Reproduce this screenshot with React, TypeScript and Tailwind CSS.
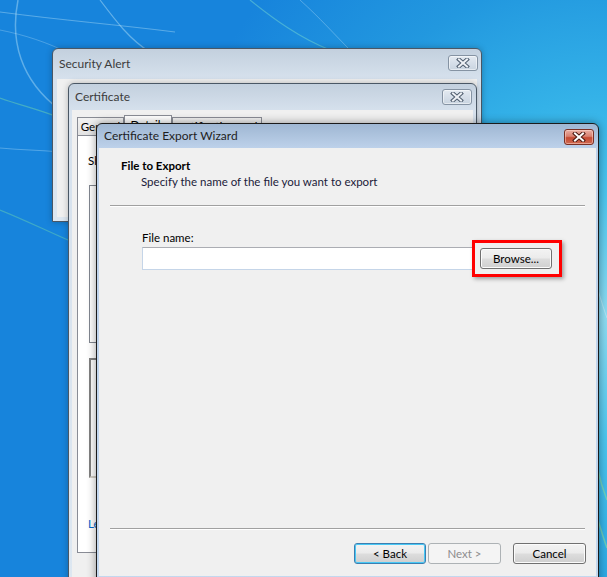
import React from 'react';

const ui = "font-['Segoe_UI','Lato',sans-serif] text-[11.5px]";

function CloseX({ variant }: { variant: 'inactive' | 'active' }) {
  const outline = variant === 'active' ? '#4a1810' : '#4f5d6e';
  const fill = variant === 'active' ? '#ffffff' : '#eef1f5';
  return (
    <svg width="14" height="10" viewBox="0 0 14 10" className="block">
      <path d="M3 1.5 L11 8.5 M11 1.5 L3 8.5" stroke={outline} strokeWidth="4" strokeLinecap="square" />
      <path d="M3 1.5 L11 8.5 M11 1.5 L3 8.5" stroke={fill} strokeWidth="2" strokeLinecap="square" />
    </svg>
  );
}

function CloseButton({ variant }: { variant: 'inactive' | 'active' }) {
  if (variant === 'active') {
    return (
      <div className="flex h-[16px] w-[30px] items-center justify-center rounded-[3px] border border-[#7a3024] bg-[linear-gradient(#eab0a5_0%,#d9806f_45%,#c54a33_55%,#cf6a52_100%)] shadow-[inset_0_0_0_1px_rgba(255,220,210,0.5)]">
        <CloseX variant="active" />
      </div>
    );
  }
  return (
    <div className="flex h-[16px] w-[30px] items-center justify-center rounded-[3px] border border-[#8593a3] bg-[linear-gradient(#e4eaf1_0%,#d6dfe9_50%,#c9d4e0_100%)] shadow-[inset_0_0_0_1px_rgba(255,255,255,0.5)]">
      <CloseX variant="inactive" />
    </div>
  );
}

function Button({
  children,
  state = 'normal',
  className = '',
}: {
  children: React.ReactNode;
  state?: 'normal' | 'default' | 'disabled';
  className?: string;
}) {
  const styles = {
    normal:
      'border-[#707070] text-[#000] bg-[linear-gradient(#f3f3f3_0%,#ebebeb_48%,#dddddd_52%,#cfcfcf_100%)] shadow-[inset_0_0_0_1px_#fbfbfb]',
    default:
      'border-[#3c7fb1] text-[#000] bg-[linear-gradient(#f3f3f3_0%,#ebebeb_48%,#dddddd_52%,#cfcfcf_100%)] shadow-[inset_0_0_0_1px_#48c8f5]',
    disabled: 'border-[#adb2b5] text-[#8d8d8d] bg-[#f4f4f4]',
  }[state];
  return (
    <div
      className={`flex h-[21px] items-center justify-center rounded-[3px] border ${styles} ${className}`}
    >
      {children}
    </div>
  );
}

function Desktop() {
  return (
    <svg className="absolute inset-0" width="607" height="577" viewBox="0 0 607 577">
      <path d="M18 0 C10 40 20 80 60 110" stroke="#b5e3f8" strokeOpacity="0.45" strokeWidth="1.5" fill="none" />
      <path d="M0 12 C60 20 120 25 175 32" stroke="#bfe6f8" strokeOpacity="0.4" strokeWidth="1" fill="none" />
      <path d="M0 30 C50 40 90 60 130 95" stroke="#bfe6f8" strokeOpacity="0.3" strokeWidth="1" fill="none" />
      <path d="M100 0 C115 20 130 40 150 52" stroke="#bfe6f8" strokeOpacity="0.45" strokeWidth="1.2" fill="none" />
      <path d="M250 0 C275 20 300 38 330 50" stroke="#7fe0d0" strokeOpacity="0.45" strokeWidth="1.2" fill="none" />
      <path d="M300 0 C320 18 335 35 350 50" stroke="#bfe6f8" strokeOpacity="0.35" strokeWidth="1" fill="none" />
      <path d="M0 98 C20 105 40 110 55 116" stroke="#6fd6b0" strokeOpacity="0.5" strokeWidth="1.2" fill="none" />
      <path d="M0 148 C20 150 40 150 60 152" stroke="#bfe6f8" strokeOpacity="0.35" strokeWidth="1" fill="none" />
      <path d="M0 210 C25 220 45 230 68 240" stroke="#6fd6b0" strokeOpacity="0.45" strokeWidth="1.2" fill="none" />
      <path d="M598 470 C600 480 603 490 607 500" stroke="#8fe0a0" strokeOpacity="0.6" strokeWidth="1.5" fill="none" />
      <path d="M598 520 C601 530 604 540 607 548" stroke="#8fe0a0" strokeOpacity="0.6" strokeWidth="1.5" fill="none" />
      <path d="M598 290 C601 300 604 310 607 318" stroke="#d5f1fb" strokeOpacity="0.5" strokeWidth="1" fill="none" />
    </svg>
  );
}

export default function App() {
  return (
    <div
      className={`${ui} relative h-[577px] w-[607px] overflow-hidden bg-[radial-gradient(ellipse_75%_85%_at_100%_55%,#8edcf2_0%,#4cc6ef_25%,#34b2e8_45%,#2298df_70%,#1784dc_100%)]`}
    >
      <Desktop />

      {/* Security Alert */}
      <div className="absolute left-[52px] top-[48px] flex h-[174px] w-[430px] flex-col rounded-t-[6px] border border-[#4a5765] bg-[linear-gradient(#c3d0de_0%,#d6e1ed_30px,#dde7f1_100%)] px-[4px] pb-[4px] shadow-[0_0_6px_rgba(0,0,0,0.25)]">
        <div className="flex h-[30px] shrink-0 items-center justify-between pl-[2px]">
          <span className="text-[12px] text-[#3c3c3c]">Security Alert</span>
          <div className="-mr-[1px] -mt-[2px]">
            <CloseButton variant="inactive" />
          </div>
        </div>
        <div className="flex-1 bg-[#f0f0f0]" />
      </div>

      {/* Certificate */}
      <div className="absolute left-[68px] top-[83px] flex h-[520px] w-[409px] flex-col rounded-t-[6px] border border-[#4a5765] bg-[linear-gradient(#c3d0de_0%,#d6e1ed_27px,#dde7f1_100%)] px-[3px] shadow-[0_0_6px_rgba(0,0,0,0.25)]">
        <div className="flex h-[26px] shrink-0 items-center justify-between pl-[3px]">
          <span className="text-[12px] text-[#3c3c3c]">Certificate</span>
          <div className="mr-[1px]">
            <CloseButton variant="inactive" />
          </div>
        </div>
        <div className="flex flex-1 flex-col bg-[#f0f0f0] px-[5px] pt-[5px]">
          <div className="flex h-[20px] items-end whitespace-nowrap">
            <div className="flex h-[18px] w-[47px] items-center justify-center overflow-hidden border border-b-0 border-[#898c95] bg-[linear-gradient(#f2f2f2,#e3e3e3)]">
              General
            </div>
            <div className="-mb-[1px] flex h-[21px] w-[48px] items-center justify-center overflow-hidden border border-b-0 border-[#898c95] bg-white pb-[2px]">
              Details
            </div>
            <div className="flex h-[18px] w-[90px] items-center justify-center overflow-hidden border border-b-0 border-[#898c95] bg-[linear-gradient(#f2f2f2,#e3e3e3)]">
              Certification Path
            </div>
          </div>
          <div className="mr-[3px] flex h-[418px] flex-col border border-[#898c95] bg-white px-[10px]">
            <div className="mt-[16px] flex items-center gap-[8px]">
              <span>Show:</span>
            </div>
            <div className="ml-[1px] mt-[16px] h-[158px] border border-[#828790]" />
            <div className="ml-[1px] mt-[15px] h-[120px] border-[2px] border-[#808080] border-b-[#d4d0c8] border-r-[#d4d0c8]" />
            <div className="mt-[37px] text-[#0066cc]">Learn more about certificate details</div>
          </div>
        </div>
      </div>

      {/* Certificate Export Wizard */}
      <div className="absolute left-[96px] top-[123px] flex h-[470px] w-[503px] flex-col rounded-t-[6px] border border-[#1b1b1b] bg-[linear-gradient(#9fb7d3_0%,#bdd1ea_24px,#c4d8ef_100%)] px-[2px] shadow-[0_0_10px_rgba(0,0,0,0.4)]">
        <div className="flex h-[24px] shrink-0 items-center justify-between pl-[5px]">
          <span className="text-[12px] text-[#1e1e1e]">Certificate Export Wizard</span>
          <div className="mt-[2px] mr-[2px]">
            <CloseButton variant="active" />
          </div>
        </div>
        <div className="flex h-[428px] flex-col bg-[#f0f0f0] text-[#000]">
          <div className="pl-[22px] pt-[10px] leading-[16px]">
            <div className="font-bold">File to Export</div>
            <div className="pl-[20px] leading-[15px] text-[#1b1b3a]">
              Specify the name of the file you want to export
            </div>
          </div>
          <div className="mx-[11px] mt-[16px] h-[1px] bg-[#a0a0a0] shadow-[0_1px_0_#ffffff]" />
          <div className="pl-[43px] pt-[24px]">
            <div className="leading-[16px]">File name:</div>
            <div className="mt-[1px] flex items-center gap-[6px]">
              <div className="h-[23px] w-[332px] border border-[#c5d5e8] border-t-[#abadb3] bg-white" />
              <div className="relative">
                <Button className="w-[72px]">Browse...</Button>
                <div className="absolute -left-[8px] -top-[8px] h-[37px] w-[90px] border-[3px] border-[#ff0000] shadow-[2px_2px_4px_rgba(0,0,0,0.35)]" />
              </div>
            </div>
          </div>
          <div className="flex-1" />
          <div className="mx-[11px] h-[1px] bg-[#a0a0a0] shadow-[0_1px_0_#ffffff]" />
          <div className="flex justify-end pb-[12px] pr-[10px] pt-[14px]">
            <Button state="default" className="w-[72px]">
              &lt; Back
            </Button>
            <Button state="disabled" className="ml-[2px] w-[73px]">
              Next &gt;
            </Button>
            <Button className="ml-[12px] w-[73px]">Cancel</Button>
          </div>
        </div>
      </div>
    </div>
  );
}
